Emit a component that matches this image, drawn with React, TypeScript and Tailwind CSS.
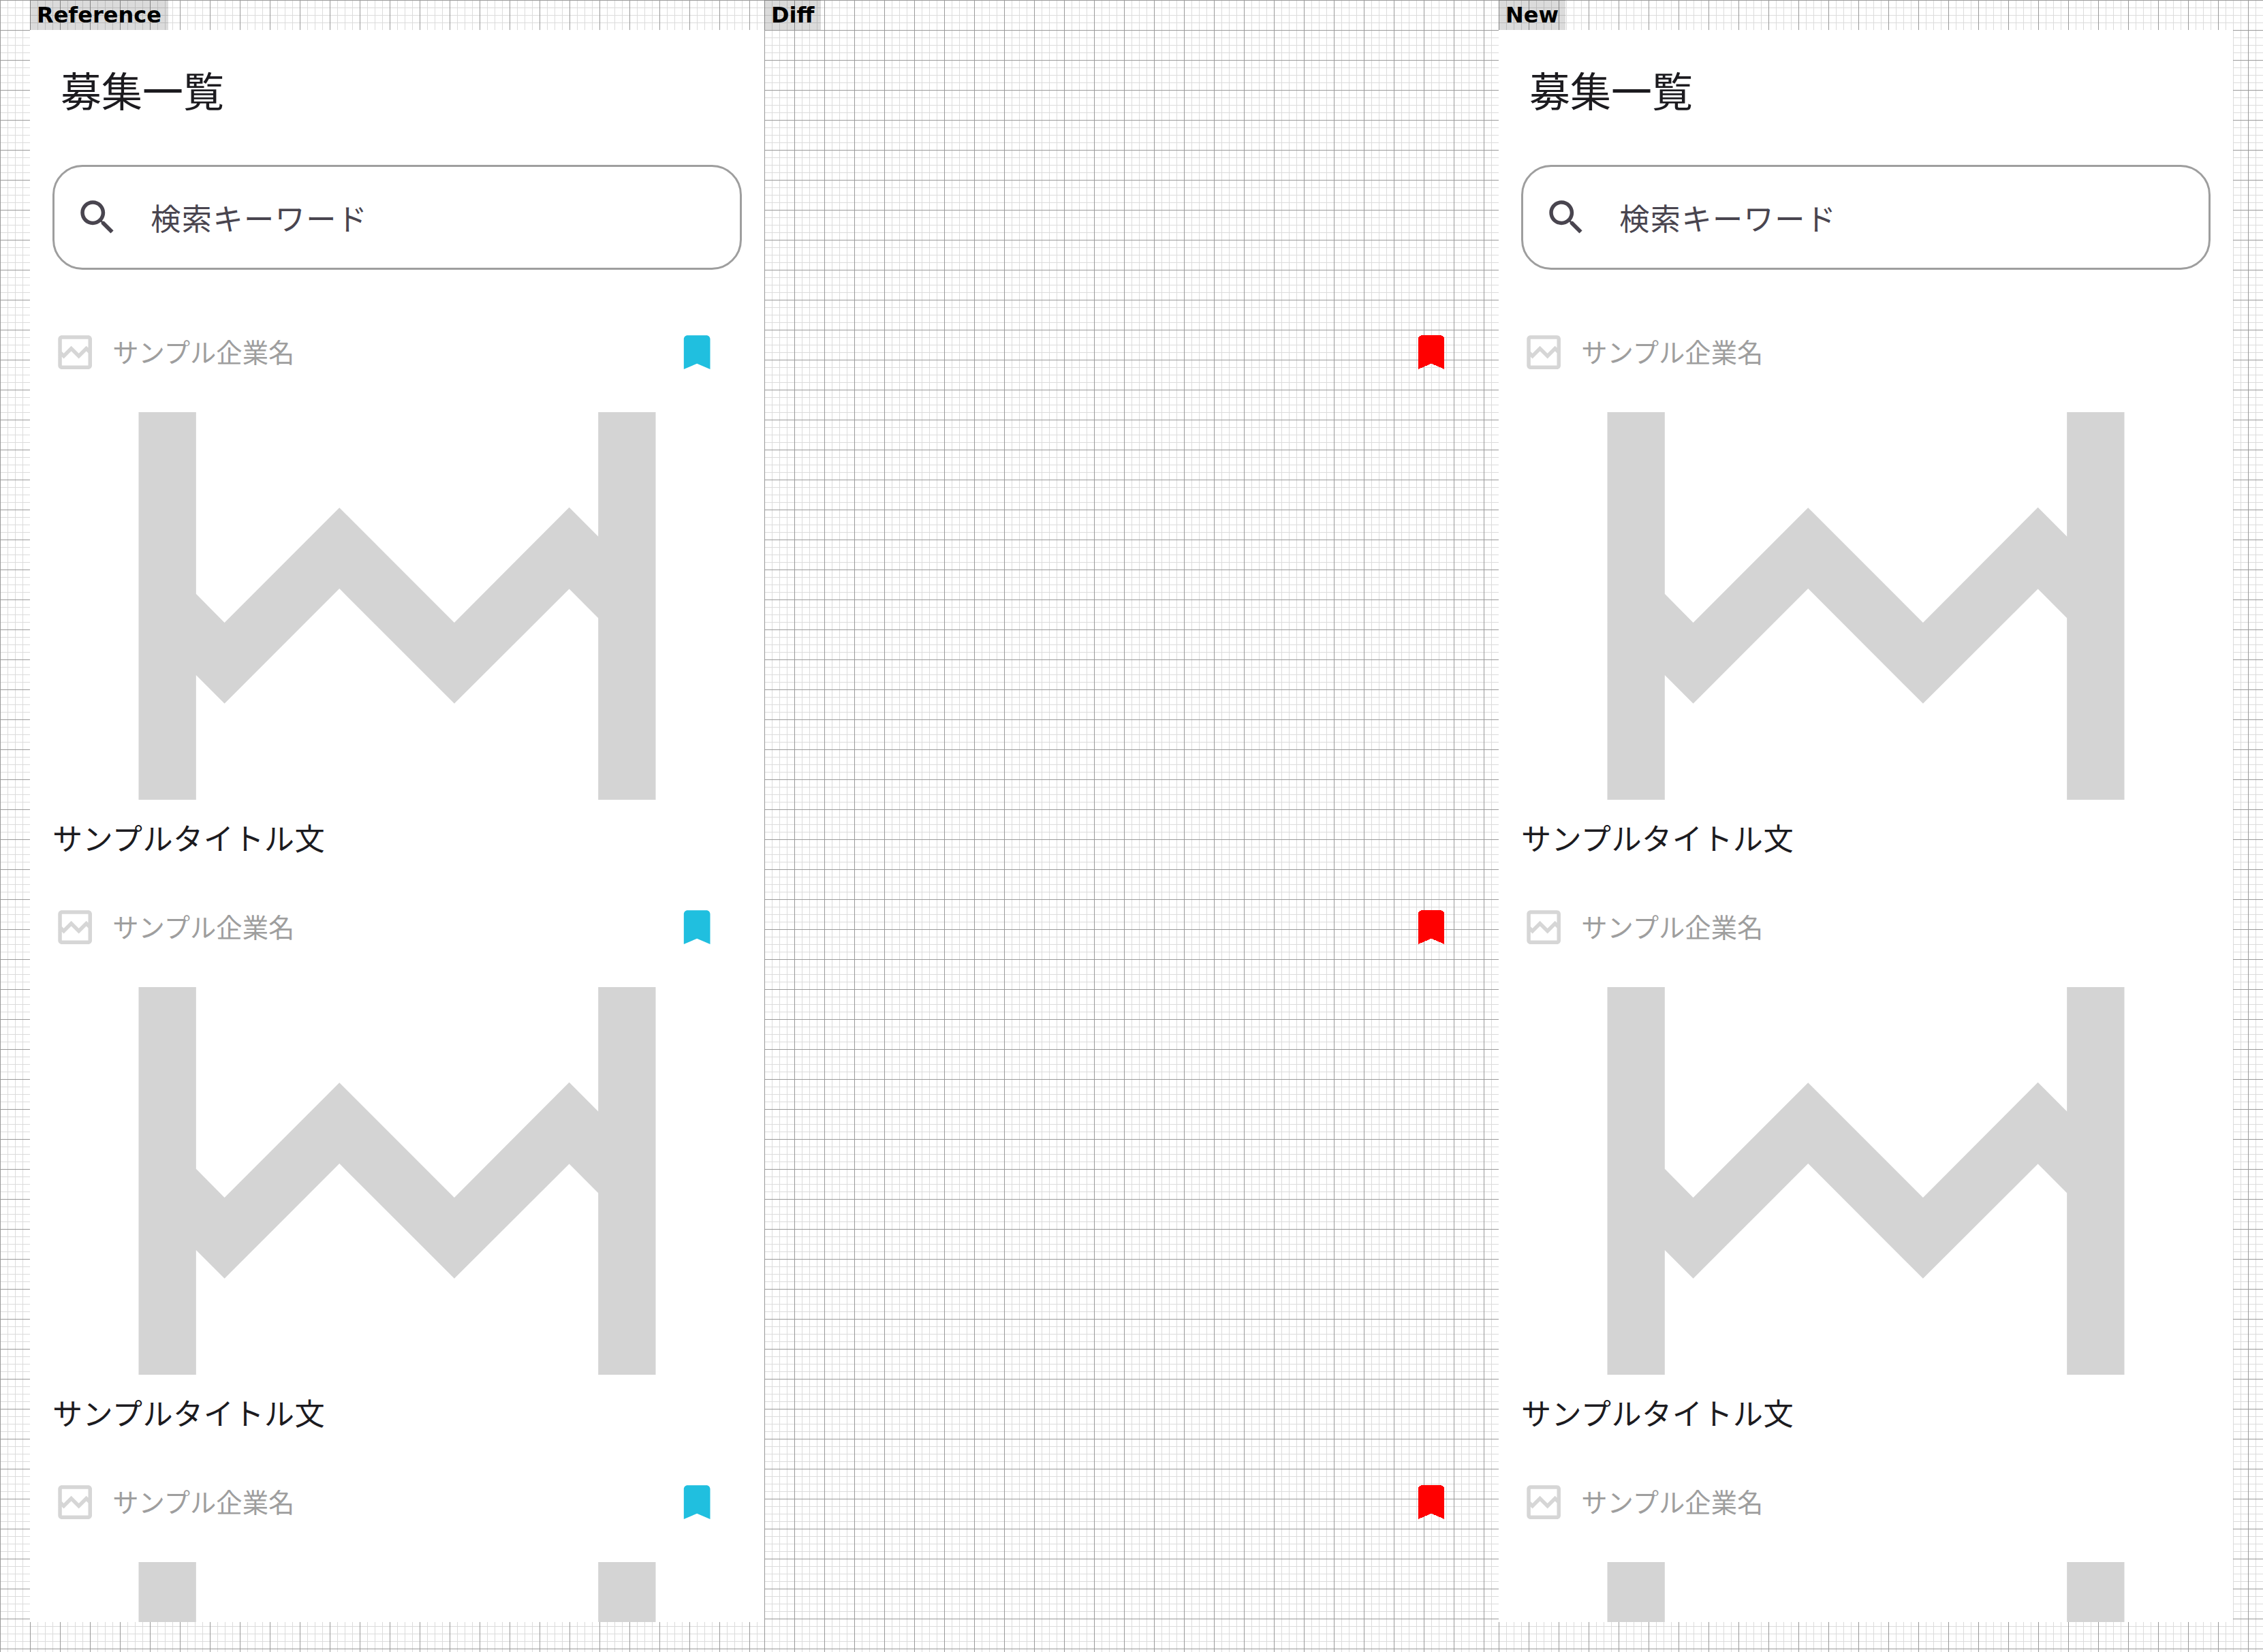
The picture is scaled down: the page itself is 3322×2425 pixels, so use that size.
const SANS = "font-['Noto_Sans_CJK_JP','Noto_Sans',sans-serif]";

const GRID =
  "bg-white bg-[linear-gradient(#9a9a9a_1px,transparent_1px),linear-gradient(90deg,#9a9a9a_1px,transparent_1px),linear-gradient(#dcdcdc_1px,transparent_1px),linear-gradient(90deg,#dcdcdc_1px,transparent_1px)] bg-[size:44px_44px,44px_44px,11px_11px,11px_11px]";

const BrokenImageIcon = ({ className }: { className: string }) => (
  <svg viewBox="0 0 24 24" className={className} fill="currentColor">
    <path d="M19 3H5c-1.1 0-2 .9-2 2v14c0 1.1.9 2 2 2h14c1.1 0 2-.9 2-2V5c0-1.1-.9-2-2-2zm0 16H5v-4.58l.99.99 4-4 4 4 4-3.99L19 12.43V19zm0-9.41l-1.01-1.01-4 4.01-4-4-4 4-.99-1V5h14v4.59z" />
  </svg>
);

const BookmarkIcon = ({ className }: { className: string }) => (
  <svg viewBox="0 0 24 24" className={className} fill="currentColor">
    <path d="M17 3H7c-1.1 0-2 .9-2 2v16l7-3 7 3V5c0-1.1-.9-2-2-2z" />
  </svg>
);

const SearchIcon = () => (
  <svg viewBox="0 0 24 24" className="h-[66.3px] w-[66.3px] shrink-0 text-[#49454f]" fill="currentColor">
    <path d="M15.5 14h-.79l-.28-.27C15.41 12.59 16 11.11 16 9.5 16 5.91 13.09 3 9.5 3S3 5.91 3 9.5 5.91 16 9.5 16c1.61 0 3.09-.59 4.23-1.57l.27.28v.79l5 4.99L20.49 19l-4.99-5zm-6 0C7.01 14 5 11.99 5 9.5S7.01 5 9.5 5 14 7.01 14 9.5 11.99 14 9.5 14z" />
  </svg>
);

type JobItemProps = {
  showTitle?: boolean;
  showBookmark: boolean;
};

// the last card is cut by the bottom of the page, its title never shows
const JobItem = ({ showTitle = true, showBookmark }: JobItemProps) => (
  <div className="h-[844px] shrink-0">
    <div className="flex h-[66.3px] items-center pr-[33px]">
      <BrokenImageIcon className="h-[66.3px] w-[66.3px] shrink-0 text-[#d6d6d6]" />
      <span className="ml-[22px] flex-1 pb-[1px] text-[38.3px] leading-none text-[#9e9e9e]">サンプル企業名</span>
      {showBookmark && <BookmarkIcon className="h-[66.3px] w-[66.3px] shrink-0 text-[#20bfdf]" />}
    </div>
    <div className="mt-[55px] h-[568.7px] overflow-hidden">
      <BrokenImageIcon className="-mt-[221.65px] h-[1012px] w-[1012px] max-w-none text-[#d4d4d4]" />
    </div>
    {showTitle && (
      <p className="mt-[22.6px] text-[44.2px] leading-[66px] tracking-[0.41px] text-[#1c1b1f]">サンプルタイトル文</p>
    )}
  </div>
);

const RecruitList = ({ showBookmark }: { showBookmark: boolean }) => (
  <div className={`h-full overflow-hidden bg-white px-[33px] ${SANS}`}>
    <h1 className="h-[198px] pt-[44px] pl-[12px] text-[60px] leading-[85px] font-normal text-[#1c1b1f]">募集一覧</h1>
    <div className="flex h-[154px] items-center rounded-[44px] border-[3px] border-[#9e9e9e] pl-[30px]">
      <SearchIcon />
      <span className="ml-[45px] text-[44.2px] leading-none tracking-[1.38px] text-[#49454f]">検索キーワード</span>
    </div>
    <div className="mt-[87.7px] flex flex-col">
      <JobItem showBookmark={showBookmark} />
      <JobItem showBookmark={showBookmark} />
      <JobItem showBookmark={showBookmark} showTitle={false} />
    </div>
  </div>
);

const Label = ({ children, className = "left-0" }: { children: string; className?: string }) => (
  <div
    className={`absolute top-0 flex h-[44px] items-center bg-black/14 px-[10px] font-['DejaVu_Sans',sans-serif] text-[32px] leading-none font-bold text-black ${className}`}
  >
    {children}
  </div>
);

export default function App() {
  return (
    <div className="flex h-[2425px] w-[3322px] overflow-hidden">
      <section className={`relative h-full w-[1122px] py-[44px] pl-[44px] ${GRID}`}>
        <Label className="left-[44px]">Reference</Label>
        <RecruitList showBookmark />
      </section>

      <section className={`relative h-full w-[1078px] ${GRID}`}>
        <Label>Diff</Label>
        {[483.7, 1327.7, 2171.7].map((top) => (
          <div key={top} className="absolute left-[945.9px]" style={{ top }}>
            <BookmarkIcon className="h-[66.3px] w-[66.3px] text-[#ff0000] [shape-rendering:crispEdges]" />
          </div>
        ))}
      </section>

      <section className={`relative h-full w-[1122px] py-[44px] pr-[44px] ${GRID}`}>
        <Label>New</Label>
        <RecruitList showBookmark={false} />
      </section>
    </div>
  );
}
